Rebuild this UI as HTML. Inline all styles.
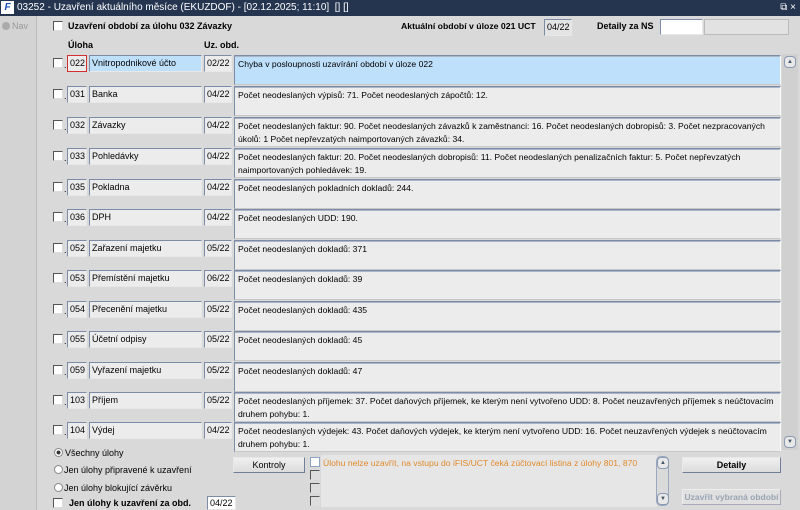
<!DOCTYPE html>
<html><head><meta charset="utf-8">
<style>
*{box-sizing:border-box;margin:0;padding:0}
html,body{width:800px;height:510px;overflow:hidden}
body{background:#d9d9d9;font-family:"Liberation Sans",Arial,sans-serif;font-size:9px;color:#000;position:relative}
.a{position:absolute;white-space:nowrap}
#tb{left:0;top:0;width:800px;height:16px;background:#253550;color:#fff;font-size:10px;line-height:16px;padding-left:17px;white-space:nowrap}
#logo{left:1px;top:1px;width:13px;height:13px;background:#fff;color:#1a4fb8;font-size:10px;font-weight:bold;line-height:13px;text-align:center;font-style:italic}
#left{left:0;top:16px;width:37px;height:494px;background:#d3d3d3;border-right:1px solid #bcbcbc}
.f{position:absolute;background:#ececec;border:1px solid;border-color:#7d8ca6 #e8e8e8 #e8e8e8 #7d8ca6;line-height:15px;padding-left:2px;white-space:nowrap;overflow:hidden;font-size:9px}
.m{position:absolute;background:#ececec;border:1px solid;border-color:#7d8ca6 #fafafa #c8c8c8 #7d8ca6;box-shadow:inset 0 1px 0 #aab6c8;line-height:13px;padding:2px 3px;font-size:8.6px;white-space:nowrap;overflow:hidden}
.cb{position:absolute;width:10px;height:10px;background:#fff;border:1px solid;border-color:#555 #ddd #ddd #555}
.b{font-weight:bold;font-size:9px}
.btn{position:absolute;background:linear-gradient(#f0f0f0,#dcdcdc);border:1px solid;border-color:#e8e8e8 #6f7f99 #6f7f99 #e8e8e8;text-align:center;font-size:9px;line-height:14px;white-space:nowrap;overflow:hidden}
.rad{position:absolute;width:9px;height:9px;border-radius:50%;background:#fff;border:1px solid #888}
.sb{position:absolute;width:12px;height:12px;border:1px solid #8a9ab3;border-radius:4px;background:#e8e8e8;font-size:6px;text-align:center;line-height:10px;color:#456}
</style></head><body>
<div id="tb" class="a">03252 - Uzavření aktuálního měsíce (EKUZDOF) - [02.12.2025; 11:10]&nbsp; [] []<span style="position:absolute;right:4px;top:0;font-size:10px">⧉ ×</span></div>
<div id="logo" class="a">F</div>
<div id="left" class="a"><div class="a" style="left:2px;top:6px;width:8px;height:8px;border-radius:50%;background:#aaa"></div><div class="a" style="left:12px;top:5px;color:#999;font-size:9px">Nav</div></div>

<div class="cb" style="left:53px;top:21px"></div>
<div class="a b" style="left:68px;top:21px">Uzavření období za úlohu 032 Závazky</div>
<div class="a b" style="left:401px;top:21px;font-size:8.7px">Aktuální období v úloze 021 UCT</div>
<div class="f" style="left:544px;top:19px;width:28px;height:17px;background:#e4e4e4">04/22</div>
<div class="a b" style="left:597px;top:21px">Detaily za NS</div>
<div class="f" style="left:660px;top:19px;width:43px;height:16px;background:#fff"></div>
<div class="f" style="left:704px;top:19px;width:85px;height:16px;background:#e2e2e2;border-color:#bbb"></div>
<div class="a b" style="left:68px;top:40px">Úloha</div>
<div class="a b" style="left:204px;top:40px">Uz. obd.</div>

<div class="a" id="rows"></div>

<div class="a" style="left:782px;top:54px;width:16px;height:396px;background:#d0d0d0"></div>
<div class="sb" style="left:784px;top:56px">▲</div>
<div class="sb" style="left:784px;top:436px">▼</div>

<div class="rad" style="left:54px;top:448px;background:radial-gradient(#333 35%,#fff 45%)"></div>
<div class="a" style="left:65px;top:448px">Všechny úlohy</div>
<div class="rad" style="left:54px;top:465px"></div>
<div class="a" style="left:64px;top:465px">Jen úlohy připravené k uzavření</div>
<div class="rad" style="left:54px;top:483px"></div>
<div class="a" style="left:64px;top:483px">Jen úlohy blokující závěrku</div>
<div class="cb" style="left:53px;top:498px"></div>
<div class="a b" style="left:69px;top:498px">Jen úlohy k uzavření za obd.</div>
<div class="f" style="left:207px;top:496px;width:29px;height:14px;background:#fff;line-height:12px">04/22</div>

<div class="btn" style="left:233px;top:457px;width:72px;height:16px">Kontroly</div>
<div class="cb" style="left:310px;top:457px;background:#fff;border-color:#8fa3c2"></div>
<div class="cb" style="left:310px;top:470px;background:#ddd"></div>
<div class="cb" style="left:310px;top:483px;background:#ddd"></div>
<div class="cb" style="left:310px;top:496px;background:#ddd"></div>
<div class="a" style="left:321px;top:455px;width:336px;height:52px;background:#e6e6e6"></div>
<div class="a" style="left:323px;top:458px;color:#e08a2c;font-size:8.6px">Úlohu nelze uzavřít, na vstupu do iFIS/UCT čeká zúčtovací listina z úlohy 801, 870</div>
<div class="a" style="left:656px;top:456px;width:13px;height:50px;border:1px solid #9aa8bf;border-radius:5px;background:#dadada"></div>
<div class="sb" style="left:657px;top:457px">▲</div>
<div class="sb" style="left:657px;top:493px">▼</div>
<div class="btn" style="left:682px;top:457px;width:99px;height:16px;font-weight:bold">Detaily</div>
<div class="btn" style="left:682px;top:489px;width:99px;height:16px;color:#9aa4b4;font-weight:bold;font-size:8.5px;background:#e0e0e0;border-color:#eee #aab #aab #eee">Uzavřít vybraná období</div>

<script>
var R=[
["022","Vnitropodnikové účto","02/22","Chyba v posloupnosti uzavírání období v úloze 022",1],
["031","Banka","04/22","Počet neodeslaných výpisů: 71. Počet neodeslaných zápočtů: 12."],
["032","Závazky","04/22","Počet neodeslaných faktur: 90. Počet neodeslaných závazků k zaměstnanci: 16. Počet neodeslaných dobropisů: 3. Počet nezpracovaných<br>úkolů: 1 Počet nepřevzatých naimportovaných závazků: 34."],
["033","Pohledávky","04/22","Počet neodeslaných faktur: 20. Počet neodeslaných dobropisů: 11. Počet neodeslaných penalizačních faktur: 5. Počet nepřevzatých<br>naimportovaných pohledávek: 19."],
["035","Pokladna","04/22","Počet neodeslaných pokladních dokladů: 244."],
["036","DPH","04/22","Počet neodeslaných UDD: 190."],
["052","Zařazení majetku","05/22","Počet neodeslaných dokladů: 371"],
["053","Přemístění majetku","06/22","Počet neodeslaných dokladů: 39"],
["054","Přecenění majetku","05/22","Počet neodeslaných dokladů: 435"],
["055","Účetní odpisy","05/22","Počet neodeslaných dokladů: 45"],
["059","Vyřazení majetku","05/22","Počet neodeslaných dokladů: 47"],
["103","Příjem","05/22","Počet neodeslaných příjemek: 37. Počet daňových příjemek, ke kterým není vytvořeno UDD: 8. Počet neuzavřených příjemek s neúčtovacím<br>druhem pohybu: 1."],
["104","Výdej","04/22","Počet neodeslaných výdejek: 43. Počet daňových výdejek, ke kterým není vytvořeno UDD: 16. Počet neuzavřených výdejek s neúčtovacím<br>druhem pohybu: 1."]];
var Y=[55,86,117,148,179,209,240,270,301,331,362,392,422],h="";
R.forEach(function(r,i){var y=Y[i];var sel=r[4];
h+='<div class="cb" style="left:53px;top:'+(y+3)+'px"></div><div class="a" style="left:64px;top:'+(y+5)+'px">.</div>';
h+='<div class="f" style="left:67px;top:'+y+'px;width:20px;height:17px;'+(sel?'border:1px solid #d03030;':'')+'">'+r[0]+'</div>';
h+='<div class="f" style="left:89px;top:'+y+'px;width:113px;height:17px;'+(sel?'background:#bfe0fb;':'')+'">'+r[1]+'</div>';
h+='<div class="f" style="left:204px;top:'+y+'px;width:28px;height:17px">'+r[2]+'</div>';
h+='<div class="m" style="left:234px;top:'+y+'px;width:547px;height:30px;'+(sel?'background:#bfe0fb;':'')+'">'+r[3]+'</div>';});
document.getElementById('rows').outerHTML=h;
</script>
</body></html>
